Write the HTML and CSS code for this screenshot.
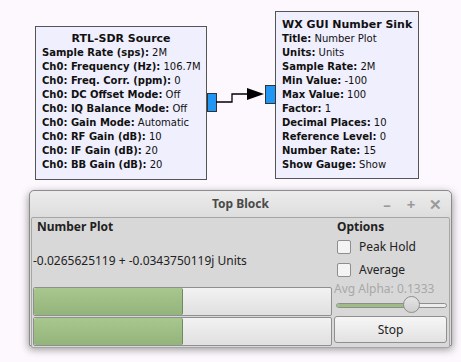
FILE: index.html
```html
<!DOCTYPE html>
<html lang="en">
<head>
    <meta charset="UTF-8">
    <meta name="viewport" content="width=device-width, initial-scale=1.0">
    <title>Flow Graph</title>
    <link rel="stylesheet" href="styles.css">
</head>
<body>
    <div class="canvas">
        <div class="block block-source">
            <div class="block-title">RTL-SDR Source</div>
            <div><b>Sample Rate (sps):</b> 2M</div>
            <div><b>Ch0: Frequency (Hz):</b> 106.7M</div>
            <div><b>Ch0: Freq. Corr. (ppm):</b> 0</div>
            <div><b>Ch0: DC Offset Mode:</b> Off</div>
            <div><b>Ch0: IQ Balance Mode:</b> Off</div>
            <div><b>Ch0: Gain Mode:</b> Automatic</div>
            <div><b>Ch0: RF Gain (dB):</b> 10</div>
            <div><b>Ch0: IF Gain (dB):</b> 20</div>
            <div><b>Ch0: BB Gain (dB):</b> 20</div>
            <span class="port port-out"></span>
        </div>

        <svg class="wire" width="60" height="30" viewBox="0 0 60 30">
            <polyline points="0,17 16,17 16,9 34,9" fill="none" stroke="#000" stroke-width="1.3"/>
            <polygon points="31,3 48,9 31,15" fill="#000"/>
        </svg>

        <div class="block block-sink">
            <div class="block-title">WX GUI Number Sink</div>
            <div><b>Title:</b> Number Plot</div>
            <div><b>Units:</b> Units</div>
            <div><b>Sample Rate:</b> 2M</div>
            <div><b>Min Value:</b> -100</div>
            <div><b>Max Value:</b> 100</div>
            <div><b>Factor:</b> 1</div>
            <div><b>Decimal Places:</b> 10</div>
            <div><b>Reference Level:</b> 0</div>
            <div><b>Number Rate:</b> 15</div>
            <div><b>Show Gauge:</b> Show</div>
            <span class="port port-in"></span>
        </div>

        <div class="window">
            <div class="titlebar">
                <span class="title">Top Block</span>
                <div class="controls">
                    <span>&#8211;</span>
                    <span>+</span>
                    <span>&#10005;</span>
                </div>
            </div>
            <div class="content">
                <div class="plot">
                    <div class="plot-title">Number Plot</div>
                    <div class="plot-value">-0.0265625119 + -0.0343750119j Units</div>
                    <div class="gauge"><div class="gauge-fill" style="width: 50%"></div></div>
                    <div class="gauge"><div class="gauge-fill" style="width: 50%"></div></div>
                </div>
                <div class="options">
                    <div class="options-title">Options</div>
                    <label class="check"><span class="box"></span>Peak Hold</label>
                    <label class="check"><span class="box"></span>Average</label>
                    <div class="alpha">Avg Alpha: 0.1333</div>
                    <div class="slider">
                        <div class="track"><div class="track-fill"></div></div>
                        <span class="knob"></span>
                    </div>
                    <button class="stop">Stop</button>
                </div>
            </div>
        </div>
    </div>
</body>
</html>
```

FILE: styles.css
```css
body {
    margin: 0;
    background-color: #fdf8fd;
    font-family: "DejaVu Sans", sans-serif;
}

.canvas {
    position: relative;
    width: 461px;
    height: 362px;
    overflow: hidden;
}

.block {
    position: absolute;
    box-sizing: border-box;
    background-color: #efeffd;
    border: 1px solid #555;
    font-size: 10px;
    line-height: 14px;
    color: #111;
    padding: 5px 0 6px 6px;
    white-space: nowrap;
}
.block b {
    font-weight: bold;
}
.block-title {
    font-weight: bold;
    font-size: 11px;
    text-align: center;
    padding-right: 6px;
}
.block-source {
    left: 35px;
    top: 26px;
    width: 172px;
    height: 154px;
}
.block-sink {
    left: 275px;
    top: 11px;
    width: 144px;
    height: 168px;
    padding-top: 6px;
}

.port {
    position: absolute;
    background-color: #2196f3;
    border: 1px solid #333;
    box-sizing: border-box;
}
.port-out {
    left: 171px;
    top: 66px;
    width: 10px;
    height: 19px;
}
.port-in {
    left: -11px;
    top: 73px;
    width: 11px;
    height: 19px;
}

.wire {
    position: absolute;
    left: 216px;
    top: 85px;
}

.window {
    position: absolute;
    left: 29px;
    top: 190px;
    width: 423px;
    height: 156px;
    box-sizing: border-box;
    border: 1px solid #8c8c8c;
    border-radius: 5px 5px 1px 1px;
    background-color: #dcdcdc;
    box-shadow: 0 3px 9px rgba(0, 0, 0, 0.45);
    font-family: "Noto Sans", sans-serif;
    font-size: 12px;
    color: #222;
    display: flex;
    flex-direction: column;
}

.titlebar {
    height: 25px;
    flex-shrink: 0;
    display: flex;
    align-items: center;
    justify-content: center;
    position: relative;
    background: linear-gradient(#ececec, #dedede);
    border-radius: 5px 5px 0 0;
}
.title {
    font-weight: bold;
    color: #4a4a4a;
    font-size: 12px;
}
.controls {
    position: absolute;
    right: 4px;
    top: 3px;
    display: flex;
    color: #9a9a9a;
    font-weight: bold;
    font-size: 15px;
}
.controls span {
    width: 24px;
    text-align: center;
}

.content {
    flex: 1;
    margin: 1px 1px 0 1px;
    border: 1px solid #a6a6a6;
    border-radius: 2px;
    background-color: #d8d8d8;
    display: flex;
    padding: 0 2px 0 1px;
}

.plot {
    width: 299px;
    display: flex;
    flex-direction: column;
}
.plot-title {
    font-weight: bold;
    padding-left: 4px;
    height: 17px;
    line-height: 17px;
}
.plot-value {
    margin-top: 17px;
    height: 35px;
    line-height: 17px;
}
.gauge {
    height: 27px;
    border: 1px solid #8f8f8f;
    border-radius: 2px;
    background: linear-gradient(#f2f2f2, #e0e0e0);
    margin-bottom: 1px;
    display: flex;
}
.gauge-fill {
    height: 100%;
    box-sizing: border-box;
    background: linear-gradient(#a8c78e, #93b47b);
    border-right: 1px solid #6f8a5f;
    border-radius: 2px;
}

.options {
    flex: 1;
    margin-left: 2px;
    display: flex;
    flex-direction: column;
}
.options-title {
    font-weight: bold;
    padding-left: 3px;
    height: 17px;
    line-height: 17px;
}
.check {
    display: flex;
    align-items: center;
    gap: 8px;
    height: 23px;
    padding-left: 3px;
}
.box {
    width: 12px;
    height: 12px;
    border: 1px solid #8e8e8e;
    border-radius: 2px;
    background-color: #f4f4f4;
}
.alpha {
    color: #a8a8a8;
    height: 15px;
    line-height: 15px;
}
.slider {
    position: relative;
    height: 18px;
}
.track {
    position: absolute;
    left: 2px;
    right: 0;
    top: 7px;
    height: 3px;
    border: 1px solid #8e8e8e;
    border-radius: 3px;
    background-color: #ececec;
}
.track-fill {
    width: 70%;
    height: 100%;
    background-color: #9ebc83;
    border-radius: 3px;
}
.knob {
    position: absolute;
    left: 69px;
    top: 0;
    width: 17px;
    height: 17px;
    box-sizing: border-box;
    border: 1px solid #8e8e8e;
    border-radius: 50%;
    background: linear-gradient(#e4e4e4, #cfcfcf);
}
.stop {
    margin-top: 2px;
    height: 27px;
    border: 1px solid #8f8f8f;
    border-radius: 3px;
    background: linear-gradient(#f6f6f6, #e2e2e2);
    font-family: "Noto Sans", sans-serif;
    font-size: 12px;
    color: #222;
}
```
